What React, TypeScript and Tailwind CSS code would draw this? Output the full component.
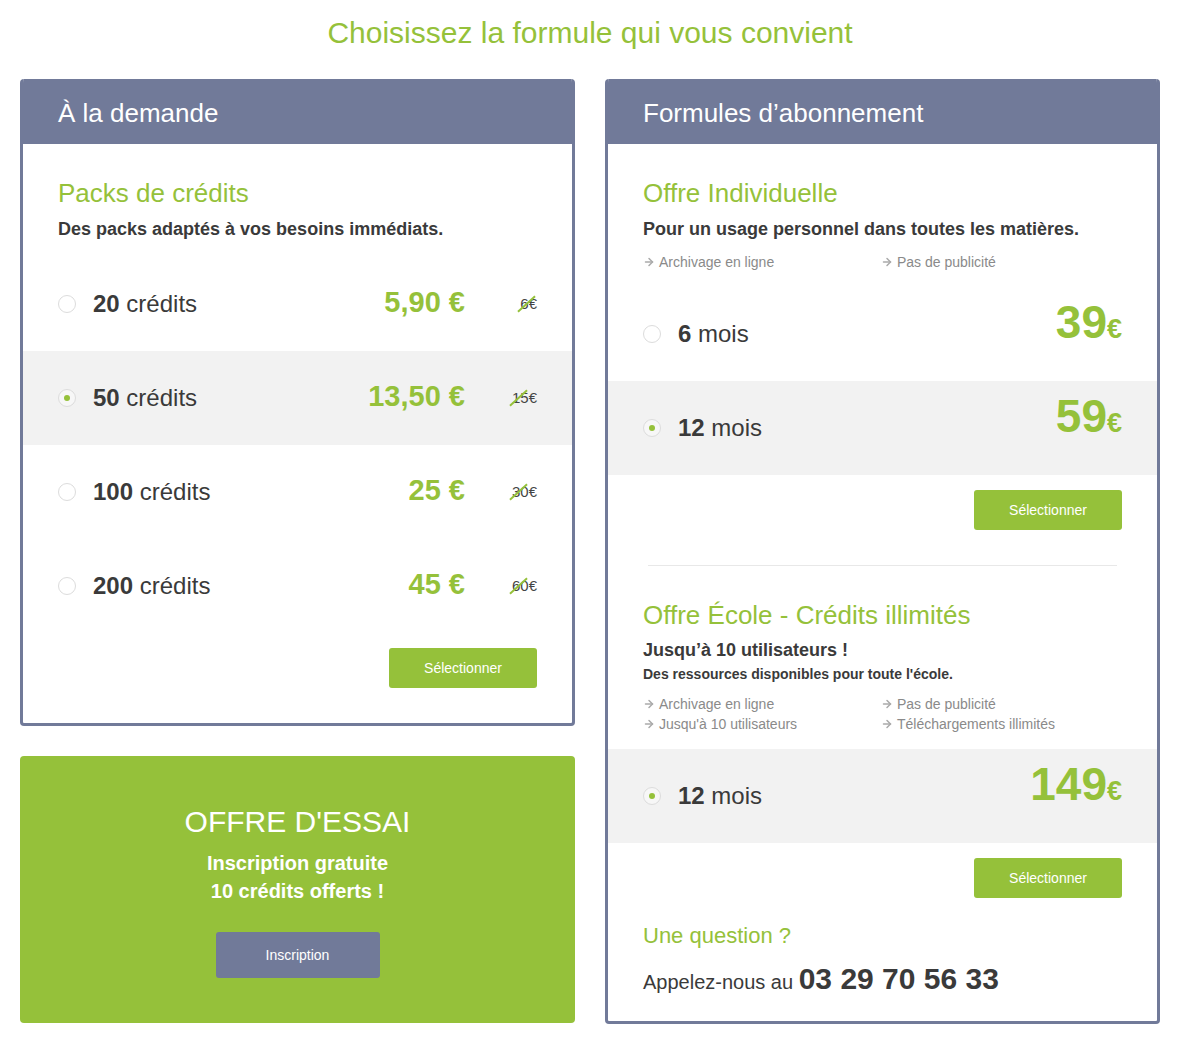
import { ArrowRight } from "lucide-react";

// ── Data ──

const packs = [
  { qty: "20", price: "5,90 €", old: "6€", selected: false },
  { qty: "50", price: "13,50 €", old: "15€", selected: true },
  { qty: "100", price: "25 €", old: "30€", selected: false },
  { qty: "200", price: "45 €", old: "60€", selected: false },
];

// ── Small pieces ──

function Radio({ checked }: { checked: boolean }) {
  return (
    <span
      className={`flex h-[18px] w-[18px] shrink-0 items-center justify-center rounded-full border border-[#dcdcdc] ${
        checked ? "bg-[#f7f7f7]" : "bg-white"
      }`}
    >
      {checked && <span className="h-[6px] w-[6px] rounded-full bg-[#95c13a]" />}
    </span>
  );
}

function OldPrice({ value }: { value: string }) {
  return (
    <span className="relative inline-block text-[15px] leading-[18px] text-[#444]">
      {value}
      <span className="absolute left-[-5px] top-[8px] h-[2px] w-[23px] -rotate-[42deg] bg-[#95c13a]" />
    </span>
  );
}

function GreenButton({ label }: { label: string }) {
  return (
    <button className="h-[40px] w-[148px] rounded-[3px] bg-[#95c13a] text-[14px] text-white">
      {label}
    </button>
  );
}

function Feature({ label }: { label: string }) {
  return (
    <div className="flex items-center gap-[4px] text-[14px] leading-[20px] text-[#8a8a8a]">
      <ArrowRight size={12} strokeWidth={3} className="text-[#aaaaaa]" />
      <span>{label}</span>
    </div>
  );
}

function Card({ title, children }: { title: string; children: React.ReactNode }) {
  return (
    <div className="overflow-hidden rounded-[4px] border-[3px] border-t-0 border-[#717a99] bg-white">
      <div className="flex h-[65px] items-center bg-[#717a99] px-[35px] pt-[3px] text-[26px] text-white">
        {title}
      </div>
      {children}
    </div>
  );
}

function MonthRow({ months, price, checked }: { months: string; price: string; checked: boolean }) {
  return (
    <div className={`flex h-[94px] items-center px-[35px] ${checked ? "bg-[#f2f2f2]" : ""}`}>
      <Radio checked={checked} />
      <span className="ml-[17px] flex-1 text-[24px] text-[#3a3a3a]">
        <b>{months}</b> mois
      </span>
      <span className="pb-[20px] font-bold text-[#95c13a]">
        <span className="text-[46px] leading-[48px]">{price}</span>
        <span className="text-[27px]">€</span>
      </span>
    </div>
  );
}

// ── Page ──

export default function App() {
  return (
    <div className="min-h-[1044px] bg-white px-[20px] pt-[15px] font-['Liberation_Sans',Arial,sans-serif] text-[#3a3a3a]">
      <h1 className="h-[36px] text-center text-[30px] leading-[36px] text-[#95c13a]">
        Choisissez la formule qui vous convient
      </h1>

      <div className="mt-[28px] grid grid-cols-2 items-start gap-[30px]">
        {/* Left column */}
        <div className="flex flex-col gap-[30px]">
          <Card title="À la demande">
            <div className="px-[35px] pt-[34px]">
              <h2 className="text-[26px] leading-[30px] text-[#95c13a]">Packs de crédits</h2>
              <p className="mt-[10px] text-[18px] font-bold leading-[22px]">
                Des packs adaptés à vos besoins immédiats.
              </p>
            </div>
            <div className="mt-[17px]">
              {packs.map((p) => (
                <div
                  key={p.qty}
                  className={`flex h-[94px] items-center px-[35px] ${p.selected ? "bg-[#f2f2f2]" : ""}`}
                >
                  <Radio checked={p.selected} />
                  <span className="ml-[17px] flex-1 text-[24px]">
                    <b>{p.qty}</b> crédits
                  </span>
                  <span className="pb-[3px] text-[29px] font-bold text-[#95c13a]">{p.price}</span>
                  <span className="flex w-[72px] justify-end">
                    <OldPrice value={p.old} />
                  </span>
                </div>
              ))}
            </div>
            <div className="flex justify-end px-[35px] pb-[35px] pt-[15px]">
              <GreenButton label="Sélectionner" />
            </div>
          </Card>

          <div className="flex flex-col items-center rounded-[4px] bg-[#95c13a] pb-[45px] pt-[48px] text-white">
            <div className="text-[30px] leading-[36px]">OFFRE D'ESSAI</div>
            <div className="mt-[9px] text-center text-[20px] font-bold leading-[28px]">
              Inscription gratuite
              <br />
              10 crédits offerts !
            </div>
            <button className="mt-[27px] h-[46px] w-[164px] rounded-[3px] bg-[#717a99] text-[14px] text-white">
              Inscription
            </button>
          </div>
        </div>

        {/* Right column */}
        <Card title="Formules d’abonnement">
          <div className="px-[35px] pt-[34px]">
            <h2 className="text-[26px] leading-[30px] text-[#95c13a]">Offre Individuelle</h2>
            <p className="mt-[10px] text-[18px] font-bold leading-[22px]">
              Pour un usage personnel dans toutes les matières.
            </p>
            <div className="mt-[12px] grid grid-cols-[238px_1fr]">
              <Feature label="Archivage en ligne" />
              <Feature label="Pas de publicité" />
            </div>
          </div>
          <div className="mt-[15px]">
            <MonthRow months="6" price="39" checked={false} />
            <MonthRow months="12" price="59" checked={true} />
          </div>
          <div className="flex justify-end px-[35px] pt-[15px]">
            <GreenButton label="Sélectionner" />
          </div>

          <div className="mx-[40px] mt-[35px] h-px bg-[#e8e8e8]" />

          <div className="px-[35px] pt-[34px]">
            <h2 className="text-[26px] leading-[30px] text-[#95c13a]">Offre École - Crédits illimités</h2>
            <p className="mt-[9px] text-[18px] font-bold leading-[22px]">Jusqu’à 10 utilisateurs !</p>
            <p className="mt-[4px] text-[14px] font-bold leading-[18px]">
              Des ressources disponibles pour toute l'école.
            </p>
            <div className="mt-[11px] grid grid-cols-[238px_1fr]">
              <Feature label="Archivage en ligne" />
              <Feature label="Pas de publicité" />
              <Feature label="Jusqu'à 10 utilisateurs" />
              <Feature label="Téléchargements illimités" />
            </div>
          </div>
          <div className="mt-[15px]">
            <MonthRow months="12" price="149" checked={true} />
          </div>
          <div className="flex justify-end px-[35px] pt-[15px]">
            <GreenButton label="Sélectionner" />
          </div>

          <div className="px-[35px] pb-[19px] pt-[24px]">
            <h3 className="text-[22px] leading-[28px] text-[#95c13a]">Une question ?</h3>
            <p className="mt-[11px] leading-[36px]">
              <span className="text-[20px]">Appelez-nous au </span>
              <span className="text-[30px] font-bold">03 29 70 56 33</span>
            </p>
          </div>
        </Card>
      </div>
    </div>
  );
}
